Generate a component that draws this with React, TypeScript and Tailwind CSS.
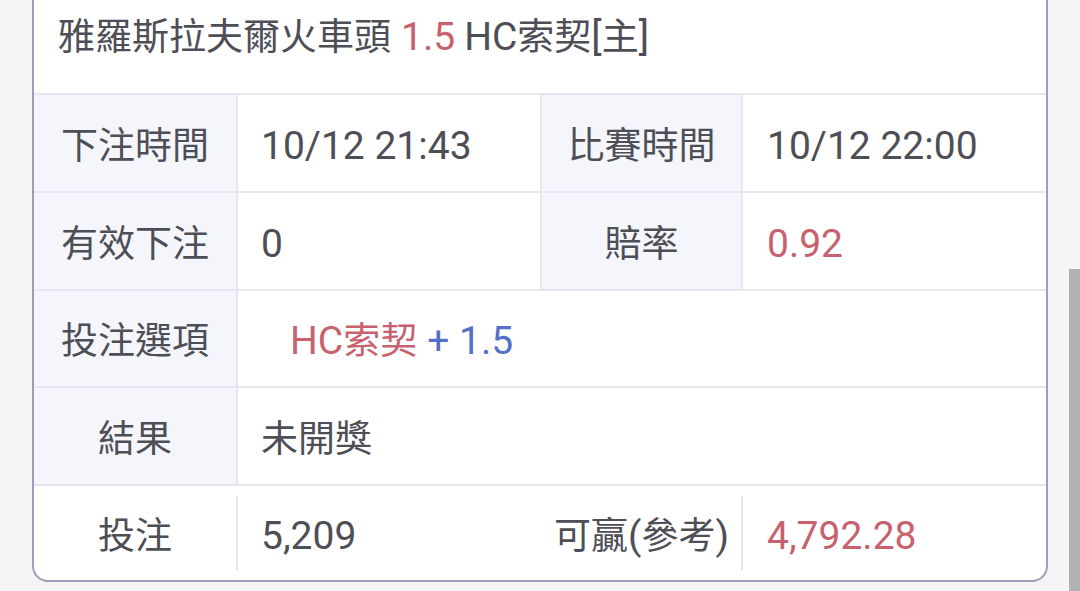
import React from 'react';

const FONT = { fontFamily: 'Roboto, "Noto Sans CJK TC", sans-serif' };

const Label = ({ children, plain }: { children: React.ReactNode; plain?: boolean }) => (
  <div className={`flex items-center justify-center pt-[6px] ${plain ? '' : 'bg-[#f5f6fb]'}`}>{children}</div>
);

// latin runs render a touch larger than the CJK glyphs
const L = ({ children, className = '' }: { children: React.ReactNode; className?: string }) => (
  <span className={`text-[39px] ${className}`}>{children}</span>
);

const App: React.FC = () => {
  return (
    <div className="relative h-[591px] w-full overflow-hidden bg-[#f5f5f7] text-[37px] text-[#4e4e56]" style={FONT}>
      {/* Card */}
      <div className="ml-[32px] w-[1016px] overflow-hidden rounded-b-[16px] border-x-2 border-b-2 border-[#9d9db9] bg-white">
        {/* Title */}
        <div className="flex h-[95px] items-center border-b-2 border-[#e6e6ee] pb-[18px] pl-[24px] leading-none">
          <span>雅羅斯拉夫爾火車頭</span>
          <L className="ml-[10px] text-[#c8616e]">1.5</L>
          <L className="ml-[9px]">HC</L>
          <span>索契</span>
          <L>[</L>
          <span>主</span>
          <L>]</L>
        </div>

        {/* Rows */}
        <div className="grid grid-cols-[202px_2px_302px_2px_199px_2px_1fr] leading-none">
          {/* Row 1 */}
          <Label>下注時間</Label>
          <div className="bg-[#e6e6ee]" />
          <div className="flex h-[96px] items-center pl-[23px] pt-[6px]"><L>10/12 21:43</L></div>
          <div className="bg-[#e6e6ee]" />
          <Label>比賽時間</Label>
          <div className="bg-[#e6e6ee]" />
          <div className="flex items-center pl-[24px] pt-[6px]"><L>10/12 22:00</L></div>
          <div className="col-span-7 h-[2px] bg-[#e6e6ee]" />

          {/* Row 2 */}
          <Label>有效下注</Label>
          <div className="bg-[#e6e6ee]" />
          <div className="flex h-[96px] items-center pl-[23px] pt-[6px]"><L>0</L></div>
          <div className="bg-[#e6e6ee]" />
          <Label>賠率</Label>
          <div className="bg-[#e6e6ee]" />
          <div className="flex items-center pl-[24px] pt-[6px]"><L className="text-[#c8616e]">0.92</L></div>
          <div className="col-span-7 h-[2px] bg-[#e6e6ee]" />

          {/* Row 3 */}
          <Label>投注選項</Label>
          <div className="bg-[#e6e6ee]" />
          <div className="col-span-5 flex h-[95px] items-center pl-[52px] pt-[6px]">
            <L className="text-[#c8616e]">HC</L>
            <span className="text-[#c8616e]">索契</span>
            <L className="ml-[10px] text-[#5570c8]">+ 1.5</L>
          </div>
          <div className="col-span-7 h-[2px] bg-[#e6e6ee]" />

          {/* Row 4 */}
          <Label>結果</Label>
          <div className="bg-[#e6e6ee]" />
          <div className="col-span-5 flex h-[96px] items-center pl-[23px] pt-[6px]">未開獎</div>
          <div className="col-span-7 h-[2px] bg-[#e6e6ee]" />

          {/* Row 5 */}
          <Label plain>投注</Label>
          <div className="my-[10px] bg-[#e6e6ee]" />
          <div className="flex h-[94px] items-center pl-[23px] pt-[6px]"><L>5,209</L></div>
          <div />
          <Label plain>
            可贏<L>(</L>參考<L>)</L>
          </Label>
          <div className="my-[10px] bg-[#e6e6ee]" />
          <div className="flex items-center pl-[24px] pt-[6px]"><L className="text-[#c8616e]">4,792.28</L></div>
        </div>
      </div>

      {/* scrollbar thumb */}
      <div className="absolute right-0 top-[269px] h-[322px] w-[11px] bg-[#b2b2b2]" />
    </div>
  );
};

export default App;
